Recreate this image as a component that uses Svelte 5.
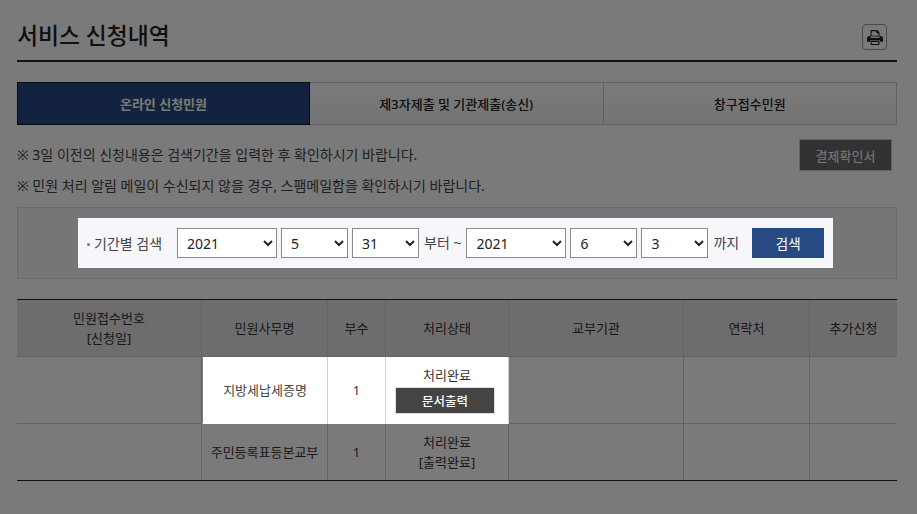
<script>
  const tabs = ["온라인 신청민원", "제3자제출 및 기관제출(송신)", "창구접수민원"];
  const notes = [
    "※ 3일 이전의 신청내용은 검색기간을 입력한 후 확인하시기 바랍니다.",
    "※ 민원 처리 알림 메일이 수신되지 않을 경우, 스팸메일함을 확인하시기 바랍니다.",
  ];
  const years = [2019, 2020, 2021];
  const months = Array.from({ length: 12 }, (_, i) => i + 1);
  const days = Array.from({ length: 31 }, (_, i) => i + 1);

  let fromYear = 2021, fromMonth = 5, fromDay = 31;
  let toYear = 2021, toMonth = 6, toDay = 3;
</script>

<div class="page">
  <header class="head">
    <h1>서비스 신청내역</h1>
    <button class="print" aria-label="인쇄">
      <svg viewBox="0 0 18 16" width="16" height="15" preserveAspectRatio="none">
        <path d="M4 0h7.500L14 2.500V7H4z M5.200 1.200v4.800h7.600V3.500h-2.300V1.200z" fill-rule="evenodd" />
        <path d="M2.500 6.500H4V8.500h10V6.500h1.500Q18 6.500 18 9v3.500h-3.500V11h-11v1.500H0V9q0-2.500 2.500-2.500z" />
        <path d="M4 11.500h10V16H4z M5.200 12.700v2.100h7.600v-2.100z" fill-rule="evenodd" />
      </svg>
    </button>
  </header>

  <ul class="tabs">
    {#each tabs as tab, i}
      <li class:active={i === 0}>{tab}</li>
    {/each}
  </ul>

  <div class="notice">
    <div class="notes">
      {#each notes as note}
        <p>{note}</p>
      {/each}
    </div>
    <button class="confirm">결제확인서</button>
  </div>

  <div class="search-box">
    <div class="search lit">
      <span class="label">기간별 검색</span>
      <select class="year" bind:value={fromYear}>
        {#each years as y}<option value={y}>{y}</option>{/each}
      </select>
      <select bind:value={fromMonth}>
        {#each months as m}<option value={m}>{m}</option>{/each}
      </select>
      <select bind:value={fromDay}>
        {#each days as d}<option value={d}>{d}</option>{/each}
      </select>
      <span class="word">부터 ~</span>
      <select class="year" bind:value={toYear}>
        {#each years as y}<option value={y}>{y}</option>{/each}
      </select>
      <select bind:value={toMonth}>
        {#each months as m}<option value={m}>{m}</option>{/each}
      </select>
      <select bind:value={toDay}>
        {#each days as d}<option value={d}>{d}</option>{/each}
      </select>
      <span class="word">까지</span>
      <button class="go">검색</button>
    </div>
  </div>

  <table>
    <colgroup>
      <col style="width:185px" />
      <col style="width:126px" />
      <col style="width:58px" />
      <col style="width:123px" />
      <col style="width:175px" />
      <col style="width:126px" />
      <col />
    </colgroup>
    <thead>
      <tr>
        <th>민원접수번호<br />[신청일]</th>
        <th>민원사무명</th>
        <th>부수</th>
        <th>처리상태</th>
        <th>교부기관</th>
        <th>연락처</th>
        <th>추가신청</th>
      </tr>
    </thead>
    <tbody>
      <tr class="row1">
        <td></td>
        <td class="lit first">지방세납세증명</td>
        <td class="lit">1</td>
        <td class="lit status">처리완료<button class="doc">문서출력</button></td>
        <td></td>
        <td></td>
        <td></td>
      </tr>
      <tr class="row2">
        <td></td>
        <td>주민등록표등본교부</td>
        <td>1</td>
        <td>처리완료<br />[출력완료]</td>
        <td></td>
        <td></td>
        <td></td>
      </tr>
    </tbody>
  </table>
</div>

<div class="dim"></div>

<style>
  :global(body) {
    margin: 0;
    background: #fff;
    overflow: hidden;
  }

  .page {
    width: 880px;
    height: 514px;
    margin-left: 17px;
    color: #333;
    font-family: "Noto Sans", "Noto Sans CJK KR", sans-serif;
    font-size: 13px;
  }

  .dim {
    position: fixed;
    inset: 0;
    background: rgba(0, 0, 0, 0.52);
    z-index: 10;
  }

  .lit {
    position: relative;
    z-index: 20;
  }

  .head {
    display: flex;
    align-items: center;
    justify-content: space-between;
    height: 60px;
    border-bottom: 2px solid #2b2b2b;
    box-sizing: content-box;
  }

  h1 {
    margin: 0;
    font-size: 22.800px;
    font-weight: 500;
    color: #222;
    padding-top: 8px;
  }

  .print {
    display: flex;
    align-items: center;
    justify-content: center;
    width: 25px;
    height: 26px;
    margin: 14px 10px 0 0;
    padding: 0;
    background: #fff;
    border: 1px solid #a0a0a0;
    border-radius: 4px;
  }

  .print svg {
    fill: #222;
  }

  .tabs {
    display: flex;
    margin: 20px 0 0;
    padding: 0;
    list-style: none;
    height: 43px;
  }

  .tabs li {
    flex: 1;
    display: flex;
    align-items: center;
    justify-content: center;
    font-weight: 500;
    font-size: 13px;
    color: #222;
    border: 1px solid #c8c8c8;
    border-left: 0;
    background: linear-gradient(#fff, #f2f2f2);
    box-sizing: border-box;
  }

  .tabs li:last-child {
    border-right: 1px solid #c8c8c8;
  }

  .tabs li.active {
    flex: 0 0 293px;
    background: #284a84;
    color: #fff;
    border: 1px solid #0c1a33;
    font-weight: 700;
  }

  .notice {
    display: flex;
    justify-content: space-between;
    margin-top: 14px;
    height: 68px;
  }

  .notes p {
    margin: 0 0 11px;
    font-size: 14px;
    line-height: 20px;
    color: #444;
  }

  .notes {
    padding-top: 6px;
  }

  .confirm {
    width: 93px;
    height: 32px;
    margin-right: 5px;
    background: #6a6a6a;
    color: #fff;
    border: 1px solid #ccc;
    font-family: inherit;
    font-size: 13px;
  }

  .search-box {
    box-sizing: border-box;
    height: 72px;
    padding: 10px 63px 10px 60px;
    border: 1px solid #e0e0e0;
    background: #f7f7fb;
  }

  .search {
    display: flex;
    align-items: center;
    gap: 4px;
    height: 50px;
    padding-left: 9px;
    background: #f7f7fb;
    color: #444;
    font-size: 14px;
  }

  .label {
    position: relative;
    width: 81px;
    padding-left: 7px;
    margin-right: 5px;
    box-sizing: border-box;
    white-space: nowrap;
  }

  .label::before {
    content: "";
    position: absolute;
    left: 0;
    top: 52%;
    width: 3px;
    height: 3px;
    border-radius: 50%;
    background: #777;
  }

  select {
    box-sizing: border-box;
    width: 67px;
    height: 30px;
    padding-left: 5px;
    background: #fff;
    border: 1px solid #8a8a8a;
    border-radius: 0;
    color: #222;
    font-family: "Noto Sans", sans-serif;
    font-size: 14px;
  }

  select.year {
    width: 100px;
  }

  .word {
    white-space: nowrap;
    margin: -3px 1px 0;
  }

  .go {
    width: 72px;
    height: 30px;
    margin-left: 8px;
    background: #284a84;
    color: #fff;
    border: 0;
    font-family: inherit;
    font-size: 13.500px;
  }

  table {
    width: 880px;
    margin-top: 20px;
    table-layout: fixed;
    border-collapse: separate;
    border-spacing: 0;
    border-top: 1px solid #222;
    border-bottom: 1px solid #222;
    text-align: center;
    line-height: 20px;
    color: #333;
  }

  th {
    height: 57px;
    padding: 0;
    font-weight: 400;
    background: #e4e4e4;
    border-right: 1px solid #d0d0d0;
    border-bottom: 1px solid #d0d0d0;
    box-sizing: border-box;
  }

  td {
    padding: 0;
    background: #fff;
    border-right: 1px solid #d0d0d0;
    border-bottom: 1px solid #d0d0d0;
  }

  th:last-child,
  td:last-child {
    border-right: 0;
  }

  .row1 td {
    height: 67px;
    box-sizing: border-box;
  }

  .row2 td {
    height: 56px;
    box-sizing: border-box;
    border-bottom: 0;
  }

  td.lit {
    background: #fff;
    border-bottom-color: #fff;
    color: #333;
  }

  td.status {
    padding-bottom: 2px;
  }

  td.first {
    border-left: 1px solid #7a7a7a;
    color: #444;
  }

  .doc {
    display: block;
    width: 100px;
    height: 27px;
    margin: 2px 0 0 9px;
    padding: 0;
    background: #444;
    color: #fff;
    border: 1px solid #ddd;
    font-family: inherit;
    font-size: 12.500px;
    font-weight: 500;
  }
</style>
